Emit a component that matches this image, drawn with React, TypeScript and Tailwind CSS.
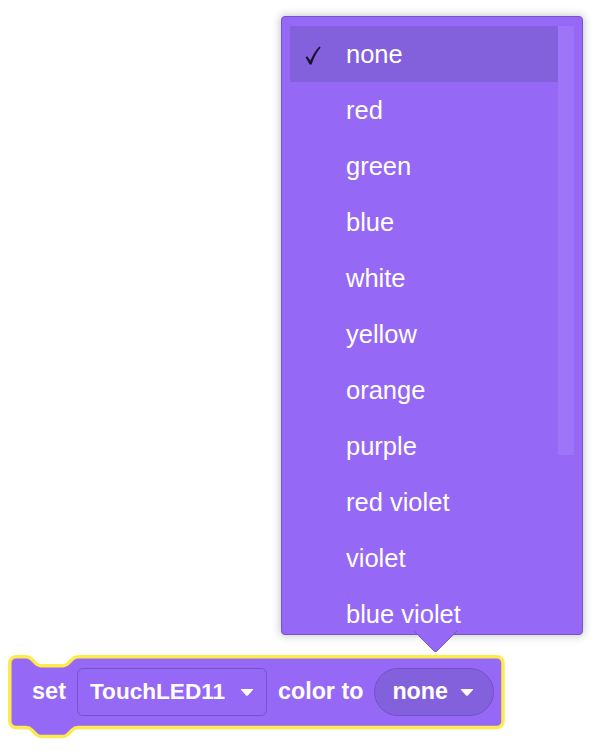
import React from "react";

const items = [
  "none",
  "red",
  "green",
  "blue",
  "white",
  "yellow",
  "orange",
  "purple",
  "red violet",
  "violet",
  "blue violet",
];

function Caret() {
  return (
    <svg width="14" height="9" viewBox="0 0 14 9" className="shrink-0">
      <path
        d="M1.5 1 L12.5 1 Q13.6 1 12.9 1.9 L7.8 7.6 Q7 8.5 6.2 7.6 L1.1 1.9 Q0.4 1 1.5 1 Z"
        fill="#ffffff"
      />
    </svg>
  );
}

function Check() {
  return (
    <svg width="16" height="19" viewBox="0 0 16 19">
      <path
        d="M0.6 11.2 L2.2 10.2 L5.4 14.6 C7.6 9.4 10.6 4.4 14.4 0.6 L15.6 1.6 C11.6 6.4 8.8 12 6.6 18.4 L4.6 18.4 Z"
        fill="#1a1428"
      />
    </svg>
  );
}

export default function App() {
  return (
    <div
      className="relative w-[608px] h-[756px] bg-white overflow-hidden"
      style={{ fontFamily: '"Liberation Sans", Arial, Helvetica, sans-serif' }}
    >
      {/* Dropdown menu */}
      <div className="absolute left-[281px] top-[16px] z-10 w-[302px] h-[619px] rounded-[4px] border border-[#7552c9] bg-[#9569f5] shadow-[0_0_9px_1px_rgba(0,0,0,0.22)]">
        <div className="absolute left-[138px] top-[599px] -z-10 w-[31px] h-[31px] rotate-45 rounded-br-[4px] border-r border-b border-[#7552c9] bg-[#9569f5]" />
        <div className="flex pl-[8px] pt-[9px] h-[617px]">
          <div className="w-[268px] h-[608px] overflow-hidden flex flex-col">
            {items.map((it, i) => (
              <div
                key={it}
                className={
                  "flex items-center h-[56px] shrink-0 pt-[2px] " +
                  (i === 0 ? "bg-[#8461dc]" : "")
                }
              >
                <div className="w-[56px] pl-[15px] flex items-center">
                  {i === 0 ? <Check /> : null}
                </div>
                <span className="text-[25.5px] text-white leading-none">{it}</span>
              </div>
            ))}
          </div>
          <div className="w-[16px] h-[429px] bg-[#9c75f8]" />
        </div>
      </div>

      {/* Block */}
      <div className="absolute left-[8px] top-[655px] w-[500px] h-[84px]">
        <svg
          className="absolute left-0 top-0"
          width="500"
          height="84"
          viewBox="0 0 500 84"
        >
          <path
            d="M 1.75 8 A 6.25 6.25 0 0 1 8 1.75 L 18 1.75 C 21 1.75 22.5 3 24 4.5 L 28.5 9 C 30 10.25 31 10.75 33 10.75 L 55 10.75 C 57 10.75 58 10.25 59.5 9 L 64 4.5 C 65.5 3 67 1.75 70 1.75 L 489 1.75 A 6 6 0 0 1 495 7.75 L 495 66.5 A 6 6 0 0 1 489 72.5 L 70 72.5 C 67 72.5 65.5 73.75 64 75.25 L 59.5 79.75 C 58 81 57 81.5 55 81.5 L 33 81.5 C 31 81.5 30 81 28.5 79.75 L 24 75.25 C 22.5 73.75 21 72.5 18 72.5 L 8 72.5 A 6.25 6.25 0 0 1 1.75 66.25 Z"
            fill="#9569f5"
            stroke="#fdeb4d"
            strokeWidth="3.5"
            strokeLinejoin="round"
          />
        </svg>
        <div className="relative flex items-center pl-[24px] pt-[13px]">
          <span className="text-[23.5px] font-bold text-white leading-none">set</span>
          <div className="ml-[11px] flex items-center gap-[15px] h-[48px] w-[190px] pl-[12px] rounded-[6px] border border-[#7552c9] bg-[#9569f5]">
            <span className="text-[22.6px] font-bold text-white leading-none">TouchLED11</span>
            <Caret />
          </div>
          <span className="ml-[11px] text-[23.3px] font-bold text-white leading-none">color to</span>
          <div className="ml-[11px] flex items-center gap-[12px] h-[48px] w-[120px] pl-[17px] rounded-full border border-[#7552c9] bg-[#8461dc]">
            <span className="text-[23.3px] font-bold text-white leading-none">none</span>
            <Caret />
          </div>
        </div>
      </div>
    </div>
  );
}
